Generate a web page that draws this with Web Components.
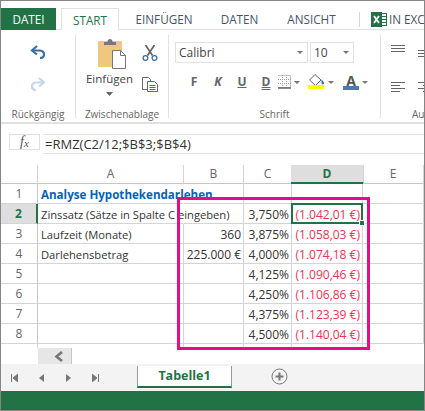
<!DOCTYPE html>
<html lang="de">
<head>
<meta charset="utf-8">
<title>Tabelle1</title>
<style>
    html, body { margin: 0; padding: 0; background: #fff; }
    body { font-family: "Open Sans", "Liberation Sans", sans-serif; color: #444; }
</style>
</head>
<body>
<excel-window>
    <ribbon-tabs></ribbon-tabs>
    <excel-ribbon></excel-ribbon>
    <formula-bar formula="=RMZ(C2/12;$B$3;$B$4)"></formula-bar>
    <sheet-grid></sheet-grid>
    <sheet-tabs name="Tabelle1"></sheet-tabs>
    <status-bar></status-bar>
</excel-window>

<script>
class ExcelWindow extends HTMLElement {
    constructor() {
        super();
        this.attachShadow({ mode: 'open' }).innerHTML = `<style>
            :host {
                display: flex;
                flex-direction: column;
                box-sizing: border-box;
                width: 425px;
                height: 411px;
                border: 1px solid #858585;
                overflow: hidden;
                background: #fff;
            }
        </style><slot></slot>`;
    }
}

class RibbonTabs extends HTMLElement {
    constructor() {
        super();
        this.attachShadow({ mode: 'open' }).innerHTML = `<style>
            :host {
                display: flex;
                box-sizing: border-box;
                height: 29px;
                padding-top: 7px;
                border-bottom: 1px solid #e1e1e1;
                font-size: 11.700px;
                color: #44546a;
                flex: none;
            }
            .tab { display: flex; align-items: center; justify-content: center; box-sizing: border-box; height: 22px; flex: none; }
            .file { width: 55px; background: #217346; color: #fff; margin-right: 5px; }
            .active {
                width: 58px;
                height: 22px;
                background: #fff;
                color: #217346;
                border: 1px solid #e1e1e1;
                border-bottom: 0;
                position: relative;
                z-index: 1;
            }
            .sep { width: 1px; height: 15px; background: #d4d4d4; margin: 4px 11px 0 6px; flex: none; }
            .addin { display: flex; align-items: center; gap: 2px; white-space: nowrap; height: 22px; }
            svg { display: block; }
        </style>
        <div class="tab file">DATEI</div>
        <div class="tab active">START</div>
        <div class="tab" style="width:90px">EINFÜGEN</div>
        <div class="tab" style="width:61px">DATEN</div>
        <div class="tab" style="width:83px">ANSICHT</div>
        <div class="sep"></div>
        <div class="addin">
            <svg width="16" height="15" viewBox="0 0 16 15">
                <rect x="10.500" y="1.500" width="5" height="12" fill="#fff" stroke="#217346"/>
                <path d="M11 4.500h4M11 7.500h4M11 10.500h4" stroke="#217346"/>
                <rect width="11" height="15" fill="#217346"/>
                <path d="M3 4 8 11M8 4 3 11" stroke="#fff" stroke-width="1.800"/>
            </svg>
            <span>IN EXC</span>
        </div>`;
    }
}

class RibbonGroup extends HTMLElement {
    static get observedAttributes() { return ['label']; }

    constructor() {
        super();
        this.attachShadow({ mode: 'open' }).innerHTML = `<style>
            :host {
                display: flex;
                flex-direction: column;
                box-sizing: border-box;
                height: 83px;
                border-right: 1px solid #e1e1e1;
                flex: none;
            }
            .body { flex: 1; min-height: 0; }
            .label { height: 15px; line-height: 15px; margin-bottom: -4px; text-align: var(--label-align, center); padding-left: var(--label-pad, 0); font-size: 10px; color: #666; white-space: nowrap; }
        </style>
        <div class="body"><slot></slot></div>
        <div class="label" id="label"></div>`;
    }

    attributeChangedCallback(name, oldValue, newValue) {
        this.shadowRoot.querySelector('#label').textContent = newValue;
    }
}

class ExcelRibbon extends HTMLElement {
    constructor() {
        super();
        this.attachShadow({ mode: 'open' }).innerHTML = `<style>
            :host {
                display: flex;
                box-sizing: border-box;
                height: 94px;
                padding-top: 5px;
                border-bottom: 2px solid #e1e1e1;
                flex: none;
                font-size: 11px;
            }
            svg { display: block; }
            .stack { display: flex; flex-direction: column; align-items: center; }
            .undo { gap: 18px; padding-top: 10px; }

            .clip { display: flex; padding-left: 10px; }
            .paste { width: 52px; display: flex; flex-direction: column; align-items: center; padding-top: 3px; }
            .paste span { font-size: 11.500px; color: #444; margin: 2px 5px 0 0; line-height: 15px; }
            .paste svg:last-child { margin: 6px 6px 0 0; }
            .tools { gap: 16px; padding: 10px 0 0 4px; }

            .font { padding: 7px 0 0 6px; }
            .combos { display: flex; gap: 2px; height: 21px; }
            .combo {
                box-sizing: border-box;
                display: flex;
                align-items: center;
                justify-content: space-between;
                height: 21px;
                padding: 0 4px 0 3px;
                border: 1px solid #e1e1e1;
                font-size: 12px;
                color: #444;
            }
            .caret { width: 0; height: 0; border: 3px solid transparent; border-top: 3px solid #777; border-bottom: 0; flex: none; }
            .btns { display: flex; align-items: center; height: 16px; margin-top: 11px; padding-left: 7px; }
            .b { width: 24px; text-align: center; font-weight: 700; font-size: 12px; line-height: 16px; color: #666; flex: none; }
            .tool { display: flex; align-items: center; flex: none; gap: 3px; }

            .align { padding: 10px 0 0 10px; display: grid; grid-template-columns: 14px 14px; column-gap: 13px; row-gap: 24px; }
            .align svg:nth-child(2) { margin-top: 5px; }
        </style>
        <ribbon-group label="Rückgängig" style="width:75px">
            <div class="stack undo">
                <svg width="16" height="14" viewBox="0 0 16 14"><path d="M7 1 2 5.500 7 9.500" fill="none" stroke="#3a6ea5" stroke-width="2.200"/><path d="M3 5.500H9C12.500 5.500 14 7.500 14 9.500S12.500 13 10 13" fill="none" stroke="#3a6ea5" stroke-width="2.200"/></svg>
                <svg width="16" height="14" viewBox="0 0 16 14"><path d="M9 1 14 5.500 9 9.500" fill="none" stroke="#c5d6e8" stroke-width="2.200"/><path d="M13 5.500H7C3.500 5.500 2 7.500 2 9.500S3.500 13 6 13" fill="none" stroke="#c5d6e8" stroke-width="2.200"/></svg>
            </div>
        </ribbon-group>
        <ribbon-group label="Zwischenablage" style="width:93px">
            <div class="clip">
                <div class="paste">
                    <svg width="30" height="31" viewBox="0 0 30 31">
                        <rect x="1" y="3" width="24" height="26" rx="1" fill="#edc87e"/>
                        <path d="M8 4h2.500C10.500 2 11.500 1 13 1s2.500 1 2.500 3H19v3H7V4z" fill="#777"/>
                        <path d="M15.500 12.500h8l5 5v13h-13z" fill="#fff" stroke="#777"/>
                        <path d="M23.500 12.500v5h5" fill="none" stroke="#777"/>
                    </svg>
                    <span>Einfügen</span>
                    <svg width="7" height="4" viewBox="0 0 7 4"><path d="M0 0h7L3.500 4z" fill="#666"/></svg>
                </div>
                <div class="stack tools">
                    <svg width="16" height="16" viewBox="0 0 16 16">
                        <path d="M3.500 0 10.500 10.500M12.500 0 5.500 10.500" stroke="#666" stroke-width="1.800" fill="none"/>
                        <circle cx="3.500" cy="13" r="2.400" fill="none" stroke="#3a6ea5" stroke-width="1.300"/>
                        <circle cx="12.500" cy="13" r="2.400" fill="none" stroke="#3a6ea5" stroke-width="1.300"/>
                    </svg>
                    <svg width="16" height="15" viewBox="0 0 16 15">
                        <path d="M.5.500h6l2 2v10h-8z" fill="#fff" stroke="#666"/>
                        <path d="M5.500 4.500h7l3 3v7h-10z" fill="#fff" stroke="#666"/>
                        <path d="M7.500 8.500h6M7.500 10.500h6M7.500 12.500h6" stroke="#3a6ea5"/>
                    </svg>
                </div>
            </div>
        </ribbon-group>
        <ribbon-group label="Schrift" style="width:212px">
            <div class="font">
                <div class="combos">
                    <div class="combo" style="width:133px"><span>Calibri</span><i class="caret"></i></div>
                    <div class="combo" style="width:44px"><span>10</span><i class="caret"></i></div>
                </div>
                <div class="btns">
                    <span class="b">F</span>
                    <span class="b" style="font-style:italic">K</span>
                    <span class="b" style="text-decoration:underline">U</span>
                    <span class="b" style="text-decoration:underline double">D</span>
                    <div class="tool">
                        <svg width="13" height="14" viewBox="0 0 13 14"><path d="M.5.500h12v12H.5" fill="none" stroke="#888" stroke-dasharray="1 1"/><path d="M4.500 0v13M8.500 0v13M0 4.500h13M0 8.500h13" stroke="#999" stroke-dasharray="1 1"/><path d="M0 13h13" stroke="#666" stroke-width="1.500"/></svg>
                        <i class="caret"></i>
                    </div>
                    <div class="tool" style="margin-left:8px">
                        <svg width="17" height="16" viewBox="0 0 17 16"><path d="M7 .5 13 6 7.500 11.500 1.500 6z" fill="#fff" stroke="#666"/><path d="M13.500 5.500c1.500 1.500 2.500 2.500 2.500 3.500s-.7 1.500-1.300 1.500-1.200-.6-1.200-1.500z" fill="#3a6ea5"/><rect y="11" width="16" height="4" fill="#ffff00"/></svg>
                        <i class="caret"></i>
                    </div>
                    <div class="tool" style="margin-left:9px">
                        <div style="width:16px;text-align:center;font-weight:700;font-size:14px;line-height:11px;color:#555;border-bottom:4px solid #4a7ab0">A</div>
                        <i class="caret"></i>
                    </div>
                </div>
            </div>
        </ribbon-group>
        <ribbon-group label="Au" style="width:43px;border:0;--label-align:left;--label-pad:31px">
            <div class="align">
                <svg width="14" height="8" viewBox="0 0 14 8"><path d="M0 .5h14M0 3.500h14M0 6.500h14" stroke="#666"/></svg>
                <svg width="14" height="8" viewBox="0 0 14 8"><path d="M0 .5h14M0 3.500h14M0 6.500h14" stroke="#666"/></svg>
                <svg width="14" height="11" viewBox="0 0 14 11"><path d="M0 .5h14M0 3.500h9M0 6.500h14M0 9.500h9" stroke="#666"/></svg>
                <svg width="14" height="11" viewBox="0 0 14 11"><path d="M0 .5h14M5 3.500h9M0 6.500h14M5 9.500h9" stroke="#666"/></svg>
            </div>
        </ribbon-group>`;
    }
}

class FormulaBar extends HTMLElement {
    static get observedAttributes() { return ['formula']; }

    constructor() {
        super();
        this.attachShadow({ mode: 'open' }).innerHTML = `<style>
            :host {
                display: flex;
                box-sizing: border-box;
                height: 41px;
                padding: 10px 0 0 8px;
                flex: none;
            }
            .fx {
                box-sizing: border-box;
                width: 31px;
                height: 16px;
                border: 1px solid #e1e1e1;
                text-align: center;
                font: italic 14px/13px "Liberation Serif", serif;
                color: #555;
            }
            .fx sub { font-size: 11px; vertical-align: baseline; position: relative; top: 1px; }
            .input {
                flex: 1;
                box-sizing: border-box;
                height: 20px;
                margin-left: 3px;
                padding-left: 2px;
                border-top: 1px solid #e1e1e1;
                border-bottom: 1px solid #e1e1e1;
                font-size: 13px;
                line-height: 19px;
                color: #333;
                white-space: nowrap;
            }
        </style>
        <div class="fx">f<sub>x</sub></div>
        <div class="input" id="input"></div>`;
    }

    attributeChangedCallback(name, oldValue, newValue) {
        this.shadowRoot.querySelector('#input').textContent = newValue;
    }
}

class SheetGrid extends HTMLElement {
    constructor() {
        super();
        const rows = [
            { a: 'Analyse Hypothekendarlehen', head: true },
            { a: 'Zinssatz (Sätze in Spalte C eingeben)', spill: true, c: '3,750%', d: '(1.042,01 €)', active: true },
            { a: 'Laufzeit (Monate)', b: '360', c: '3,875%', d: '(1.058,03 €)' },
            { a: 'Darlehensbetrag', b: '225.000 €', c: '4,000%', d: '(1.074,18 €)' },
            { c: '4,125%', d: '(1.090,46 €)' },
            { c: '4,250%', d: '(1.106,86 €)' },
            { c: '4,375%', d: '(1.123,39 €)' },
            { c: '4,500%', d: '(1.140,04 €)' }
        ];

        let cells = '<div class="corner"></div>';
        for (const col of ['A', 'B', 'C', 'D', 'E']) {
            cells += `<div class="col${col === 'D' ? ' on' : ''}">${col}</div>`;
        }
        rows.forEach((r, i) => {
            const open = r.head || r.spill ? ' open' : '';
            cells += `<div class="num${r.active ? ' on' : ''}">${i + 1}</div>`;
            cells += `<div class="cell left${open}${r.head ? ' head' : ''}"><span>${r.a || ''}</span></div>`;
            cells += `<div class="cell">${r.b || ''}</div>`;
            cells += `<div class="cell">${r.c || ''}</div>`;
            cells += `<div class="cell red${r.active ? ' sel' : ''}">${r.d || ''}</div>`;
            cells += '<div class="cell"></div>';
        });
        cells += '<div class="stub"></div><div class="stub"></div><div class="stub"></div><div class="stub"></div><div class="stub"></div><div></div>';

        this.attachShadow({ mode: 'open' }).innerHTML = `<style>
            :host {
                display: block;
                position: relative;
                flex: none;
                height: 199px;
            }
            .grid {
                display: grid;
                grid-template-columns: 37px 146px 60px 48px 71px 61px;
                grid-template-rows: 19px repeat(8, 20px) 4px;
                font-size: 12px;
                color: #333;
            }
            .grid > div { box-sizing: border-box; white-space: nowrap; }
            .corner { border-right: 1px solid #d4d4d4; border-bottom: 1px solid #c6c6c6; }
            .col {
                border-right: 1px solid #d4d4d4;
                border-bottom: 1px solid #c6c6c6;
                text-align: center;
                font-size: 12px;
                line-height: 18px;
                color: #666;
            }
            .col.on { background: #dedede; color: #217346; font-weight: 700; border-bottom: 2px solid #217346; margin-left: -1px; margin-right: -1px; }
            .num {
                border-right: 1px solid #c6c6c6;
                border-bottom: 1px solid #d4d4d4;
                text-align: center;
                font-size: 12px;
                line-height: 20px;
                color: #666;
            }
            .num.on { background: #dedede; color: #217346; font-weight: 700; border-right: 2px solid #217346; }
            .cell {
                border-right: 1px solid #d4d4d4;
                border-bottom: 1px solid #d4d4d4;
                padding: 0 2px;
                line-height: 22px;
                text-align: right;
            }
            .left { text-align: left; padding-left: 3px; font-size: 11.200px; }
            .open { border-right-color: transparent; overflow: visible; }
            .head { font-weight: 700; font-size: 11.600px; color: #0563b6; }
            .red { color: #f0324f; }
            .sel { position: relative; }
            .sel::after {
                content: '';
                position: absolute;
                left: -1px;
                top: -1px;
                right: -1px;
                bottom: -1px;
                border: 2px solid #217346;
            }
            .sel::before {
                content: '';
                position: absolute;
                right: -3px;
                bottom: -3px;
                width: 4px;
                height: 4px;
                background: #217346;
                border: 1px solid #fff;
                z-index: 1;
            }
            .stub { border-right: 1px solid #d4d4d4; }
            .scroll { display: flex; height: 16px; padding-left: 37px; }
            .thumb {
                box-sizing: border-box;
                width: 34px;
                background: #e6e6e6;
                border-right: 1px solid #c6c6c6;
                display: flex;
                align-items: center;
                justify-content: flex-end;
                padding-right: 8px;
            }
            svg { display: block; }
            .mark {
                position: absolute;
                left: 176px;
                top: 32px;
                width: 193px;
                height: 153px;
                box-sizing: border-box;
                border: 3px solid #e80a88;
                pointer-events: none;
            }
        </style>
        <div class="grid">${cells}</div>
        <div class="scroll">
            <div class="thumb"><svg width="9" height="11" viewBox="0 0 9 11"><path d="M8 1 2.500 5.500 8 10" fill="none" stroke="#777" stroke-width="2.600"/></svg></div>
        </div>
        <div class="mark"></div>`;
    }
}

class SheetTabs extends HTMLElement {
    static get observedAttributes() { return ['name']; }

    constructor() {
        super();
        this.attachShadow({ mode: 'open' }).innerHTML = `<style>
            :host {
                display: flex;
                box-sizing: border-box;
                height: 27px;
                background: #f3f3f3;
                padding-top: 2px;
                flex: none;
            }
            svg { display: block; }
            .nav { display: flex; width: 136px; box-sizing: border-box; padding: 8px 0 0 10px; gap: 20px; flex: none; }
            .tab {
                box-sizing: border-box;
                width: 95px;
                height: 22px;
                background: #fff;
                border-left: 1px solid #999;
                border-right: 1px solid #999;
                border-bottom: 2px solid #217346;
                text-align: center;
                font-size: 12.500px;
                font-weight: 700;
                line-height: 20px;
                color: #217346;
            }
            .add { margin: 2px 0 0 39px; }
        </style>
        <div class="nav">
            <svg width="7" height="8" viewBox="0 0 7 8"><path d="M7 0v8L2 4zM.5 0v8" fill="#777" stroke="#777"/></svg>
            <svg width="7" height="8" viewBox="0 0 7 8"><path d="M6 0v8L1 4z" fill="#777"/></svg>
            <svg width="7" height="8" viewBox="0 0 7 8"><path d="M1 0v8l5-4z" fill="#777"/></svg>
            <svg width="7" height="8" viewBox="0 0 7 8"><path d="M0 0v8l5-4zM6.500 0v8" fill="#777" stroke="#777"/></svg>
        </div>
        <div class="tab" id="name"></div>
        <svg class="add" width="17" height="17" viewBox="0 0 17 17"><circle cx="8.500" cy="8.500" r="7.500" fill="none" stroke="#777"/><path d="M8.500 4.500v8M4.500 8.500h8" stroke="#777" stroke-width="2"/></svg>`;
    }

    attributeChangedCallback(name, oldValue, newValue) {
        this.shadowRoot.querySelector('#name').textContent = newValue;
    }
}

class StatusBar extends HTMLElement {
    constructor() {
        super();
        this.attachShadow({ mode: 'open' }).innerHTML = `<style>
            :host { display: block; flex: 1; background: #217346; }
        </style>`;
    }
}

customElements.define('excel-window', ExcelWindow);
customElements.define('ribbon-tabs', RibbonTabs);
customElements.define('ribbon-group', RibbonGroup);
customElements.define('excel-ribbon', ExcelRibbon);
customElements.define('formula-bar', FormulaBar);
customElements.define('sheet-grid', SheetGrid);
customElements.define('sheet-tabs', SheetTabs);
customElements.define('status-bar', StatusBar);
</script>
</body>
</html>
